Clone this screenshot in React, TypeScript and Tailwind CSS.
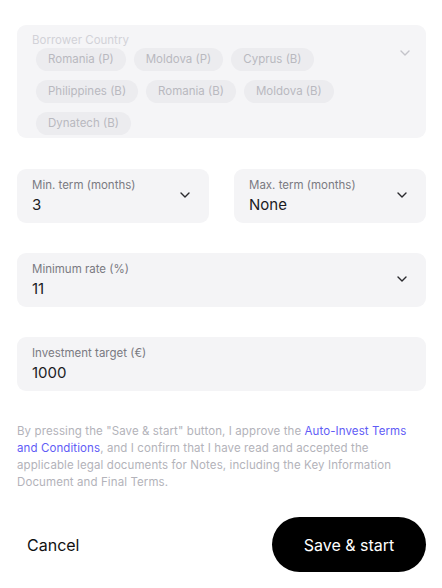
import React from 'react';

const CHIPS: string[][] = [
  ['Romania (P)', 'Moldova (P)', 'Cyprus (B)'],
  ['Philippines (B)', 'Romania (B)', 'Moldova (B)'],
  ['Dynatech (B)'],
];

const Chevron = ({ className = '' }: { className?: string }) => (
  <svg width="10" height="6" viewBox="0 0 10 6" fill="none" className={className}>
    <path d="M1 1l4 4 4-4" stroke="currentColor" strokeWidth="1.4" strokeLinecap="round" strokeLinejoin="round" />
  </svg>
);

const SelectBox = ({ label, value, chevron = true }: { label: string; value: string; chevron?: boolean }) => (
  <div className="flex items-center justify-between h-[54px] rounded-[9px] bg-[#f4f4f6] pl-[15px] pr-[19px]">
    <div className="flex flex-col">
      <span className="text-[11.5px] leading-[16px] text-[#7a7a82]">{label}</span>
      <span className="text-[15px] leading-[20px] text-[#1b1b1f] mt-[2px]">{value}</span>
    </div>
    {chevron && <Chevron className="text-[#2a2a2e] mt-[-2px]" />}
  </div>
);

export default function App() {
  return (
    <div className="w-[442px] h-[588px] bg-white pl-[17px] pr-[16px] pt-[25px] font-['Inter',sans-serif] overflow-hidden">
      <div className="relative rounded-[9px] bg-[#f5f5f7] pl-[15px] pr-[19px] pt-[8px] pb-[4px] h-[113px]">
        <div className="text-[11.5px] leading-[15px] text-[#d2d2d8]">Borrower Country</div>
        <div className="flex flex-col gap-[9px] pl-[4px]">
          {CHIPS.map((row, i) => (
            <div key={i} className="flex gap-[8px]">
              {row.map((c) => (
                <span key={c} className="h-[23px] flex items-center px-[12px] rounded-full bg-[#ececef] text-[11.5px] text-[#b9b9bf]">
                  {c}
                </span>
              ))}
            </div>
          ))}
        </div>
        <Chevron className="absolute right-[16px] top-[25px] text-[#c4c4ca]" />
      </div>

      <div className="grid grid-cols-2 gap-[25px] mt-[31px]">
        <SelectBox label="Min. term (months)" value="3" />
        <SelectBox label="Max. term (months)" value="None" />
      </div>

      <div className="mt-[30px]">
        <SelectBox label="Minimum rate (%)" value="11" />
      </div>

      <div className="mt-[30px]">
        <SelectBox label="Investment target (€)" value="1000" chevron={false} />
      </div>

      <p className="mt-[32px] pr-[4px] text-[11.5px] leading-[17px] tracking-[0.1px] text-[#b3b3ba]">
        By pressing the "Save &amp; start" button, I approve the{' '}
        <span className="text-[#5f5cf6]">Auto-Invest Terms and Conditions</span>, and I confirm that I have read and accepted the
        applicable legal documents for Notes, including the Key Information Document and Final Terms.
      </p>

      <div className="flex items-center justify-between mt-[26px]">
        <button className="pl-[10px] text-[16px] text-[#111]">Cancel</button>
        <button className="w-[154px] h-[55px] rounded-full bg-black text-white text-[16px]">Save &amp; start</button>
      </div>
    </div>
  );
}
